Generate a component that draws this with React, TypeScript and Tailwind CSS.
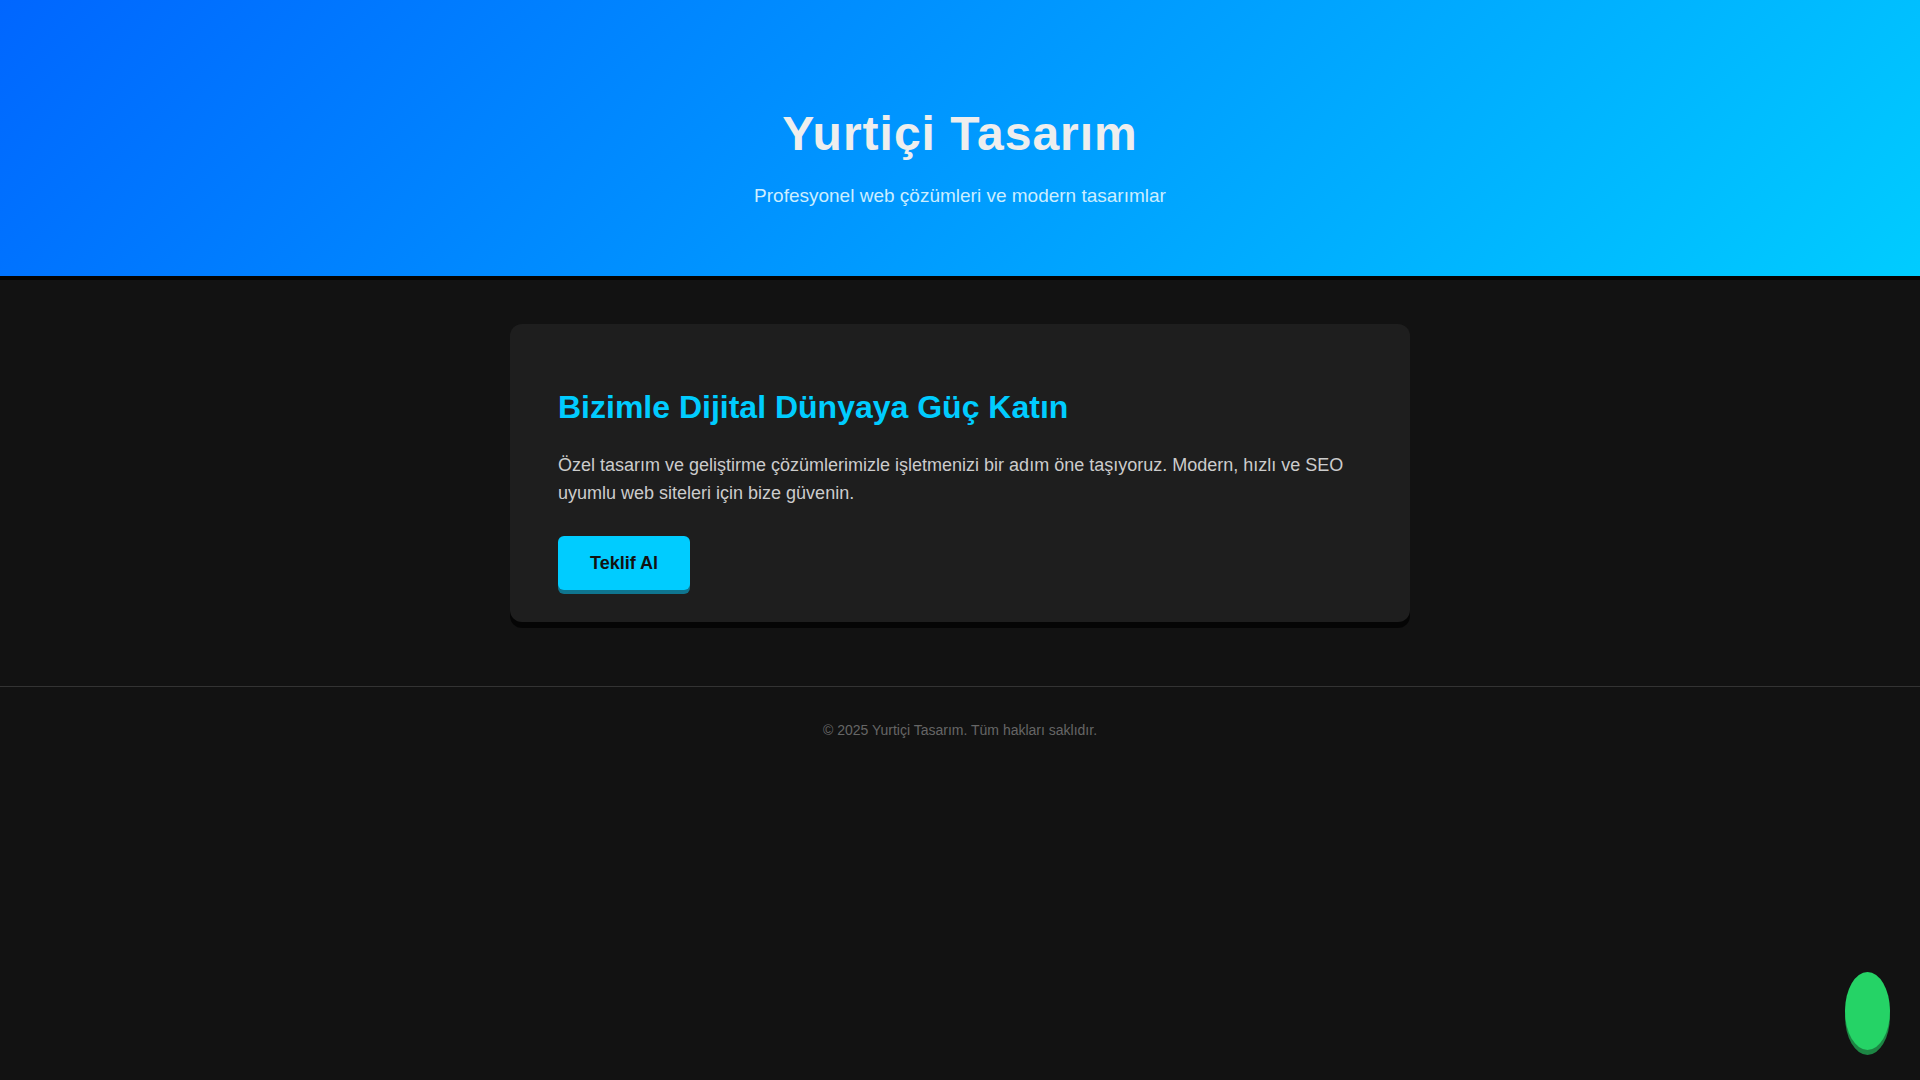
export default function App() {
  return (
    <div className="min-h-screen bg-[#121212] font-['Liberation_Sans',Arial,sans-serif] text-[#eeeeee]">
      <header className="bg-linear-[135deg,#0066ff,#00ccff] px-5 pt-[100px] pb-[63px] text-center shadow-[0_4px_0_rgba(0,0,0,0.8)]">
        <h1 className="text-5xl leading-[67px] font-bold tracking-[1px]">Yurtiçi Tasarım</h1>
        <p className="mt-3 text-[19px] leading-[34px] text-[#cceeff]">Profesyonel web çözümleri ve modern tasarımlar</p>
      </header>

      <main className="px-5">
        <section className="mx-auto mt-12 w-full max-w-[900px] rounded-xl bg-[#1e1e1e] px-12 pt-[58px] pb-8 shadow-[0_6px_0_rgba(0,0,0,0.7)]">
          <h2 className="text-[32px] leading-[51px] font-bold text-[#00ccff]">Bizimle Dijital Dünyaya Güç Katın</h2>
          <p className="mt-[18px] text-[18px] leading-7 text-[#cccccc]">
            Özel tasarım ve geliştirme çözümlerimizle işletmenizi bir adım öne taşıyoruz. Modern, hızlı ve SEO uyumlu web
            siteleri için bize güvenin.
          </p>
          <a
            href="#teklif"
            className="mt-[29px] inline-block rounded-md bg-[#00ccff] px-8 py-3 align-top text-[18px] leading-[30px] font-bold text-[#121212] shadow-[0_4px_0_rgba(0,204,255,0.5)]"
          >
            Teklif Al
          </a>
        </section>
      </main>

      <footer className="mt-16 border-t border-[#333333] p-7 text-center text-[14px] leading-[30px] text-[#666666]">
        © 2025 Yurtiçi Tasarım. Tüm hakları saklıdır.
      </footer>

      <a
        href="#whatsapp"
        aria-label="WhatsApp"
        className="fixed right-[30px] bottom-[30px] h-[78px] w-[45px] rounded-[50%] bg-[#25d366] shadow-[0_5px_0_rgba(37,211,102,0.6)]"
      />
    </div>
  );
}
